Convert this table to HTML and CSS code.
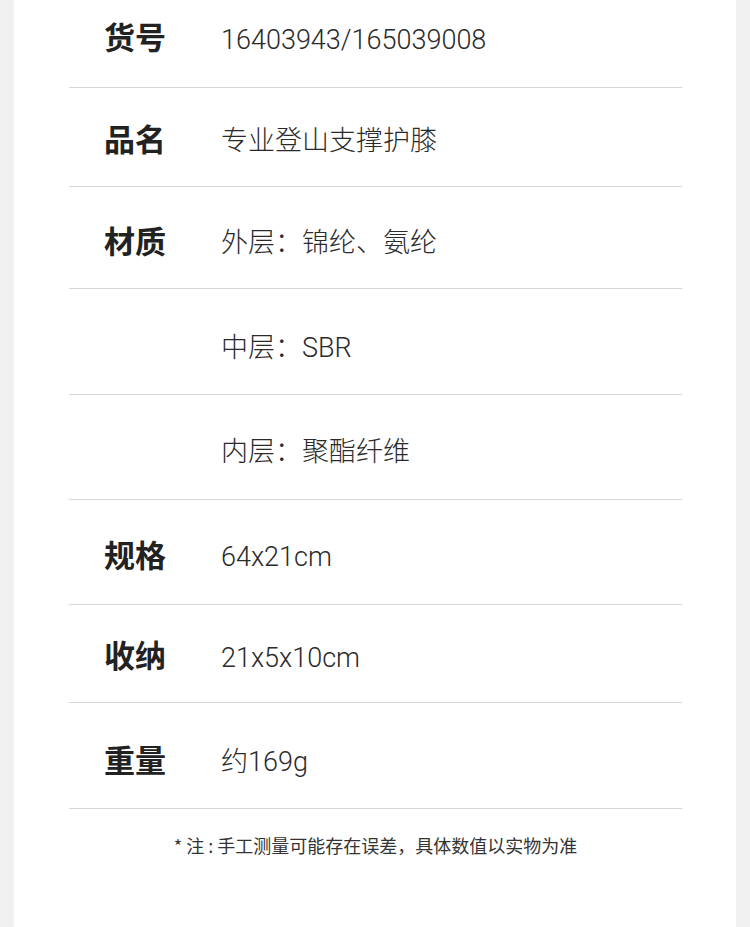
FILE: index.html
```html
<!DOCTYPE html>
<html lang="zh">
<head>
<meta charset="utf-8">
<link rel="stylesheet" href="styles.css">
</head>
<body>
<div class="card">
  <div class="specs">
    <div class="row row--first"><div class="label">货号</div><div class="value">16403943/165039008</div></div>
    <div class="row row--s"><div class="label">品名</div><div class="value">专业登山支撑护膝</div></div>
    <div class="row"><div class="label">材质</div><div class="value">外层：锦纶、氨纶</div></div>
    <div class="row row--l"><div class="label"></div><div class="value">中层：SBR</div></div>
    <div class="row row--m"><div class="label"></div><div class="value">内层：聚酯纤维</div></div>
    <div class="row row--m"><div class="label">规格</div><div class="value">64x21cm</div></div>
    <div class="row row--xs"><div class="label">收纳</div><div class="value">21x5x10cm</div></div>
    <div class="row row--l"><div class="label">重量</div><div class="value">约169g</div></div>
  </div>
  <p class="note">* 注 : 手工测量可能存在误差，具体数值以实物为准</p>
</div>
</body>
</html>
```

FILE: styles.css
```css
html, body {
  margin: 0;
  padding: 0;
}
body {
  background: #f0f0f0;
  font-family: "Noto Sans CJK SC", sans-serif;
}
.card {
  margin: 0 14px;
  height: 927px;
  background: #fff;
  padding: 0 54px 0 55px;
  box-sizing: border-box;
  overflow: hidden;
}
.specs {
  display: flex;
  flex-direction: column;
}
.row {
  display: flex;
  align-items: center;
  box-sizing: border-box;
  height: 102px;
  padding-top: 9px;
  border-bottom: 1px solid #d6d6d6;
}
.row--first { height: 88px; padding-top: 0; padding-bottom: 10px; }
.row--s { height: 99px; padding-top: 6px; }
.row--xs { height: 98px; padding-top: 6px; }
.row--m { height: 105px; padding-top: 8px; }
.row--l { height: 106px; padding-top: 11px; }
.label {
  width: 117px;
  padding-left: 35px;
  margin-bottom: 5px;
  flex: none;
  font-family: "Noto Sans CJK SC", sans-serif;
  font-weight: 700;
  font-size: 31px;
  line-height: 40px;
  color: #222;
}
.value {
  margin-top: 2px;
  font-family: Roboto, "Noto Sans CJK SC", sans-serif;
  font-size: 27px;
  line-height: 40px;
  color: #2a2a2a;
  font-weight: 300;
}
.note {
  margin: 24px 0 0;
  text-align: center;
  font-family: "Noto Sans CJK SC", sans-serif;
  font-size: 18px;
  color: #333;
  line-height: 24px;
}
```
